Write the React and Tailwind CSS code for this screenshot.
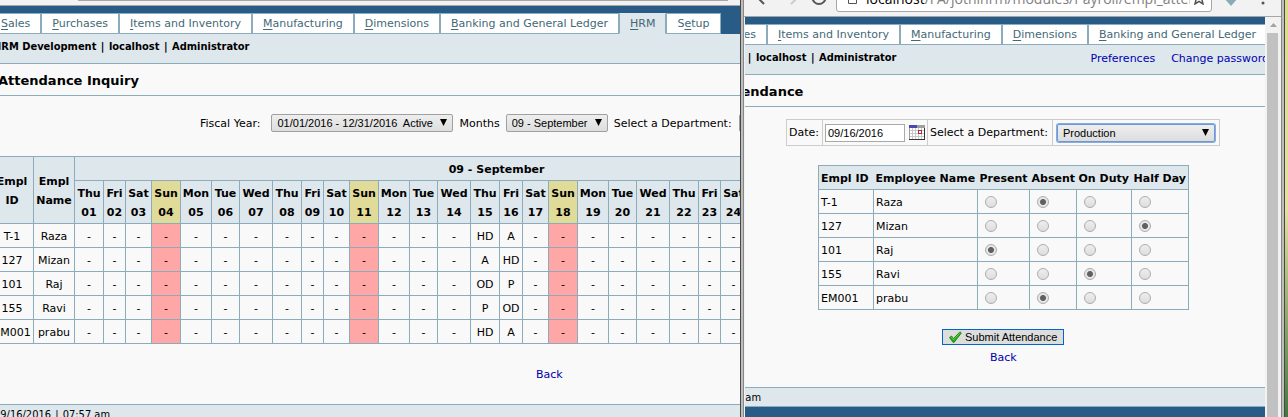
import { useState } from "react";

const DAY_NAMES = ["Thu", "Fri", "Sat", "Sun", "Mon", "Tue", "Wed"];
const DAY_WIDTHS = [29, 22, 26, 29, 31, 28, 33];
const DAYS = Array.from({ length: 30 }, (_, i) => ({
  num: String(i + 1).padStart(2, "0"),
  name: DAY_NAMES[i % 7],
  width: i === 15 ? 23 : DAY_WIDTHS[i % 7],
  sunday: i % 7 === 3,
}));

const EMPLOYEES = [
  { id: "T-1", name: "Raza", marks: { 15: "HD", 16: "A" }, today: "Absent" },
  { id: "127", name: "Mizan", marks: { 15: "A", 16: "HD" }, today: "Half Day" },
  { id: "101", name: "Raj", marks: { 15: "OD", 16: "P" }, today: "Present" },
  { id: "155", name: "Ravi", marks: { 15: "P", 16: "OD" }, today: "On Duty" },
  { id: "EM001", name: "prabu", marks: { 15: "HD", 16: "A" }, today: "Absent" },
];

const STATUSES = ["Present", "Absent", "On Duty", "Half Day"];

const TABS = [
  ["", "S", "ales"],
  ["", "P", "urchases"],
  ["", "I", "tems and Inventory"],
  ["", "M", "anufacturing"],
  ["", "D", "imensions"],
  ["", "B", "anking and General Ledger"],
  ["", "H", "RM"],
  ["S", "e", "tup"],
];

function Tabs({ className }) {
  return (
    <nav className="shrink-0 overflow-hidden bg-[#285b85] pt-[7px]">
      <div className={`flex ${className}`}>
        {TABS.map(([before, key, after]) => {
          const active = key === "H";
          return (
            <a
              key={key}
              href="#"
              className={`h-[21px] shrink-0 whitespace-nowrap border border-[#8cacbb] px-[10px] leading-[20px] text-[#436976] ${
                active ? "border-b-[#dee7ec] border-t-[#dee7ec] bg-[#dee7ec]" : "bg-white"
              }`}
            >
              {before}
              <span className="underline underline-offset-2">{key}</span>
              {after}
            </a>
          );
        })}
      </div>
    </nav>
  );
}

function Bar() {
  return <span className="px-px"> | </span>;
}

function SiteLine({ className }) {
  return (
    <p className={`font-['DejaVu_Sans_Condensed','DejaVu_Sans',sans-serif] font-bold whitespace-nowrap ${className}`}>
      HRM Development
      <Bar />
      localhost
      <Bar />
      Administrator
    </p>
  );
}

function Picker({ id, options, className, boxClassName }) {
  return (
    <span className={`relative block ${boxClassName}`}>
      <select
        id={id}
        className={`block h-[18px] w-full appearance-none rounded-[2px] border bg-linear-to-b from-[#eeeeee] to-[#dddddd] pl-[5px] font-['Liberation_Sans',sans-serif] text-[11px] leading-[14px] whitespace-pre text-black outline-none ${className}`}
      >
        {options.map((o) => (
          <option key={o}>{o}</option>
        ))}
      </select>
      <svg className="pointer-events-none absolute top-[5px] right-[6px]" width="7" height="7" viewBox="0 0 7 7">
        <path d="M0 0H7L3.5 7Z" fill="#000" />
      </svg>
    </span>
  );
}

function InquiryTable() {
  const cell = "border border-[#8cacbb] px-0 pt-[2px] pb-0 text-center";
  return (
    <table className="-ml-[10px] w-[929px] table-fixed border-collapse">
      <colgroup>
        <col className="w-[43px]" />
        <col className="w-[41px]" />
        {DAYS.map((d) => (
          <col key={d.num} style={{ width: d.width }} />
        ))}
      </colgroup>
      <thead className="bg-[#dee7ec] leading-[19px]">
        <tr className="h-[24px]">
          <th rowSpan={2} className={cell}>Empl<br />ID</th>
          <th rowSpan={2} className={cell}>Empl<br />Name</th>
          <th colSpan={30} className={cell}>09 - September</th>
        </tr>
        <tr className="h-[43px]">
          {DAYS.map((d) => (
            <th key={d.num} className={`${cell} ${d.sunday ? "bg-[#e0db98]" : ""}`}>
              {d.name}
              <br />
              {d.num}
            </th>
          ))}
        </tr>
      </thead>
      <tbody>
        {EMPLOYEES.map((e) => (
          <tr key={e.id} className="h-[24px]">
            <td className={cell}>{e.id}</td>
            <td className={cell}>{e.name}</td>
            {DAYS.map((d) => (
              <td key={d.num} className={`${cell} ${d.sunday ? "bg-[#ffa6a6]" : ""}`}>
                {e.marks[Number(d.num)] || "-"}
              </td>
            ))}
          </tr>
        ))}
      </tbody>
    </table>
  );
}

function InquiryWindow() {
  return (
    <section className="flex min-w-0 flex-col overflow-hidden bg-[#f9f9f9]">
      <div className="h-[6px] shrink-0 border-b border-[#a6a6a6] bg-[#f2f2f2] pr-3 pl-[78px]">
        <div className="h-px bg-[#a6a6a6]" />
      </div>
      <Tabs className="-ml-[10px]" />
      <header className="h-[30px] shrink-0 border-b border-[#8cacbb] bg-[#dee7ec] leading-[25px]">
        <SiteLine className="-ml-[7px]" />
      </header>
      <h1 className="h-[32px] shrink-0 border-b border-[#8cacbb] text-[13px] leading-[33px] font-bold whitespace-nowrap">
        <span className="-ml-[2px]">Attendance Inquiry</span>
      </h1>
      <form className="mt-[18px] flex shrink-0 items-center gap-[6px] pl-[200px] whitespace-nowrap">
        <label htmlFor="year" className="pr-[5px]">Fiscal Year:</label>
        <Picker id="year" options={["01/01/2016 - 12/31/2016\u00a0 Active"]} boxClassName="w-[182px] shrink-0" className="border-[#a0a0a0]" />
        <label htmlFor="month">Months</label>
        <Picker id="month" options={["09 - September"]} boxClassName="w-[102px] shrink-0" className="border-[#a0a0a0]" />
        <label htmlFor="dept" className="pr-px">Select a Department:</label>
        <Picker id="dept" options={["All"]} boxClassName="w-[150px] shrink-0" className="border-[#a0a0a0]" />
      </form>
      <div className="mt-6 shrink-0">
        <InquiryTable />
      </div>
      <a href="#" className="mt-[23px] ml-[536px] shrink-0 self-start leading-[15px] text-[#0000b0]">Back</a>
      <footer className="mt-[22px] h-[30px] shrink-0 border-t border-[#8cacbb] bg-[#dee7ec] leading-[20px]">
        <p className="-ml-[6px] font-['DejaVu_Sans_Condensed','DejaVu_Sans',sans-serif]">
          09/16/2016
          <Bar />
          07:57 am
        </p>
      </footer>
    </section>
  );
}

function BrowserBar() {
  return (
    <div className="h-[17px] shrink-0 overflow-hidden border-b border-[#a6a6a6] bg-[#f2f2f2]">
      <div className="-mt-[16px] flex h-[28px] items-start">
        <svg className="shrink-0" width="92" height="28" viewBox="0 0 92 28" fill="none" strokeWidth="2">
          <path d="M20 6L13 13L20 20" stroke="#555" />
          <path d="M47 20L54 13" stroke="#ccc" />
          <circle cx="75" cy="13.500" r="6.500" stroke="#555" />
        </svg>
        <div className="flex h-[28px] w-[376px] shrink-0 items-start rounded-[3px] border border-[#a6a6a6] bg-white pl-[11px]">
          <svg className="mt-[8px] shrink-0" width="9" height="11" viewBox="0 0 9 11" fill="none" stroke="#555">
            <path d="M.5 .5H5.5L8.5 3.5V10.5H.5Z" />
          </svg>
          <p className="ml-[9px] w-[324px] overflow-hidden font-['Open_Sans',sans-serif] text-[14px] leading-[28px] whitespace-nowrap text-[#808080]">
            <span className="text-black">localhost</span>/FA/jothihrm/modules/Payroll/empl_atter
          </p>
          <svg className="mt-[5px] ml-[2px] shrink-0" width="14" height="15" viewBox="0 0 14 15" fill="none" stroke="#555" strokeWidth="1.5">
            <path d="M7 1L8.8 5.5L13 6L9.8 9L11 14L7 11.4L3 14L4.2 9L1 6L5.200 5.500Z" />
          </svg>
        </div>
        <svg className="ml-3 shrink-0" width="50" height="28" viewBox="0 0 50 28">
          <path d="M0 14L7 8L14 14L7 22Z" fill="#86adb5" />
          <circle cx="39" cy="19" r="1.500" fill="#555" />
        </svg>
      </div>
    </div>
  );
}

function AttendanceWindow() {
  const [marks, setMarks] = useState(() => Object.fromEntries(EMPLOYEES.map((e) => [e.id, e.today])));
  const cell = "border border-[#8cacbb] px-[2px] pt-px pb-0 text-left";
  const box = "border border-[#cccccc]";
  return (
    <section className="flex min-w-0 overflow-hidden bg-[#f2f2f2]">
      <div className="flex shrink-0">
        <div className="w-px bg-[#484848]" />
        <div className="w-[2px] bg-[#bdbdbd]" />
        <div className="w-px bg-[#878787]" />
      </div>
      <div className="flex min-w-0 flex-1 flex-col">
        <BrowserBar />
        <div className="flex min-h-0 flex-1 pl-px">
          <div className="flex min-w-0 flex-1 flex-col overflow-hidden bg-[#f9f9f9]">
            <Tabs className="-ml-[107px]" />
            <header className="flex h-[30px] shrink-0 justify-between border-b border-[#8cacbb] bg-[#dee7ec] leading-[25px] whitespace-nowrap">
              <SiteLine className="-ml-[105px]" />
              <div className="-mr-1 flex gap-4 leading-[27px] text-[#0000b0]">
                <a href="#">Preferences</a>
                <a href="#">Change password</a>
              </div>
            </header>
            <h1 className="h-[32px] shrink-0 border-b border-[#8cacbb] text-[13px] leading-[33px] font-bold">
              <span className="-ml-[26px]">Attendance</span>
            </h1>
            <form className="flex shrink-0 flex-col items-start">
              <table className="mt-3 ml-[41px] border-collapse whitespace-nowrap">
                <tbody>
                  <tr className="h-[26px]">
                    <td className={`${box} w-[36px] p-0 pl-[2px]`}>
                      <label htmlFor="date">Date:</label>
                    </td>
                    <td className={`${box} w-[105px] p-0 pl-[2px]`}>
                      <div className="flex items-center gap-1">
                        <input
                          id="date"
                          type="text"
                          defaultValue="09/16/2016"
                          className="h-[18px] w-[80px] border border-[#a9a9a9] bg-white px-[2px] font-['Liberation_Sans',sans-serif] text-[11px]"
                        />
                        <button type="button" aria-label="Pick a date">
                          <svg className="block" width="16" height="15" viewBox="0 0 16 15" shapeRendering="crispEdges">
                            <rect width="16" height="15" fill="#fff" />
                            <path d="M3.500 3V14M6.500 3V14M9.500 3V14M12.500 3V14M1 5.500H15M1 8.500H15M1 11.500H15" stroke="#c8c8c8" />
                            <path d="M0 0H8V3H0Z" fill="#4a4aae" />
                            <path d="M8 0H16V3H8Z" fill="#a0a0a0" />
                            <path d="M.5 3V14.500" stroke="#a0a0a0" />
                            <path d="M15.500 3V14.500H0" stroke="#333" fill="none" />
                            <rect x="9.500" y="5.500" width="3" height="3" fill="#fff" stroke="#b03030" />
                          </svg>
                        </button>
                      </div>
                    </td>
                    <td className={`${box} w-[125px] p-0 pl-[2px]`}>
                      <label htmlFor="department">Select a Department:</label>
                    </td>
                    <td className={`${box} w-[167px] p-0 pl-1`}>
                      <Picker id="department" options={["Production"]} boxClassName="w-[158px]" className="border-[#6f97d2] ring-1 ring-[#86abe0]" />
                    </td>
                  </tr>
                </tbody>
              </table>
              <table className="mt-[19px] ml-[73px] w-[371px] table-fixed border-collapse border border-[#8cacbb] whitespace-nowrap">
                <colgroup>
                  <col className="w-[55px]" />
                  <col className="w-[104px]" />
                  <col className="w-[52px]" />
                  <col className="w-[47px]" />
                  <col className="w-[55px]" />
                  <col className="w-[57px]" />
                </colgroup>
                <thead className="bg-[#dee7ec]">
                  <tr className="h-[24px]">
                    {["Empl ID", "Employee Name", ...STATUSES].map((h) => (
                      <th key={h} className="px-[2px] pt-[2px] pb-0 text-left">{h}</th>
                    ))}
                  </tr>
                </thead>
                <tbody>
                  {EMPLOYEES.map((e) => (
                    <tr key={e.id} className="h-[24px]">
                      <td className={cell}>{e.id}</td>
                      <td className={cell}>{e.name}</td>
                      {STATUSES.map((s) => (
                        <td key={s} className="border border-[#8cacbb] p-0 pl-[7px]">
                          <input
                            type="radio"
                            name={e.id}
                            aria-label={`${e.name} ${s}`}
                            checked={marks[e.id] === s}
                            onChange={() => setMarks({ ...marks, [e.id]: s })}
                            className="block size-3 appearance-none rounded-full border border-[#adadad] bg-linear-to-b from-[#eeeeee] to-[#dddddd] checked:bg-[radial-gradient(circle,#606060_0_2.5px,#e6e6e6_3.5px)]"
                          />
                        </td>
                      ))}
                    </tr>
                  ))}
                </tbody>
              </table>
              <button
                type="button"
                className="mt-[19px] ml-[197px] flex h-[16px] items-center gap-[3px] border border-[#0066cc] bg-[#dddddd] px-[6px] font-['Liberation_Sans',sans-serif] whitespace-nowrap"
              >
                <svg width="13" height="12" viewBox="0 0 13 12">
                  <path d="M.5 6.500L2.500 5L4.500 7.500L11 .8L12.300 2L5.200 11.300H4Z" fill="#1fae14" stroke="#14780c" strokeWidth=".8" />
                  <path d="M2.200 6L4.600 8.700L11 1.700" stroke="#7be05a" strokeWidth=".7" fill="none" />
                </svg>
                Submit Attendance
              </button>
            </form>
            <a href="#" className="mt-[5px] ml-[245px] shrink-0 self-start leading-[15px] text-[#0000b0]">Back</a>
            <footer className="mt-[22px] flex-1 bg-[#285b85]">
              <p className="h-[20px] overflow-hidden border-y border-[#8cacbb] bg-[#dee7ec] leading-[19px] whitespace-nowrap">
                <span className="-ml-[100px] font-['DejaVu_Sans_Condensed','DejaVu_Sans',sans-serif]">
                  09/16/2016
                  <Bar />
                  07:57 am
                </span>
              </p>
            </footer>
          </div>
          <div className="flex w-[16px] shrink-0 flex-col items-center pr-px">
            <svg className="my-[6px] ml-px shrink-0" width="7" height="4" viewBox="0 0 7 4">
              <path d="M3.500 0L7 4H0Z" fill="#a3a3a3" />
            </svg>
            <div className="w-[11px] flex-1 bg-[#c1c1c1]" />
          </div>
        </div>
      </div>
      <div className="flex shrink-0">
        <div className="w-px bg-[#878787]" />
        <div className="w-[2px] bg-[#bdbdbd]" />
        <div className="w-px bg-[#484848]" />
        <div className="w-[3px] bg-linear-to-b from-[#d8dc8c] via-[#e6e29a] to-[#3e7a3c]" />
      </div>
    </section>
  );
}

export default function App() {
  return (
    <main className="grid h-screen grid-cols-[740fr_548fr] overflow-hidden bg-[#f9f9f9] font-['DejaVu_Sans',Verdana,sans-serif] text-[11px] leading-[15px] text-black">
      <InquiryWindow />
      <AttendanceWindow />
    </main>
  );
}
